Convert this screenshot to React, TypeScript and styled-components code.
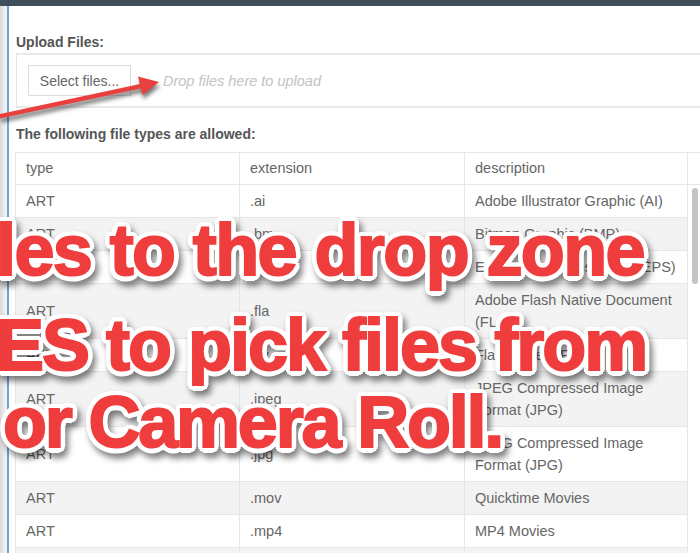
import React from "react";
import styled, { createGlobalStyle } from "styled-components";

const GlobalStyle = createGlobalStyle`
  html, body {
    margin: 0;
    padding: 0;
    background: #ffffff;
  }
  body {
    width: 700px;
    height: 553px;
    overflow: hidden;
    font-family: "Liberation Sans", Arial, sans-serif;
  }
`;

// white rim around the caption letters, built from ring offsets
const rim = (() => {
  const parts: string[] = [];
  [2, 4, 5.5].forEach((r) => {
    for (let i = 0; i < 16; i++) {
      const a = (i / 16) * Math.PI * 2;
      parts.push(`${(Math.cos(a) * r).toFixed(2)}px ${(Math.sin(a) * r).toFixed(2)}px 0 #fff`);
    }
  });
  return parts.join(", ");
})();

const Page = styled.div`
  position: relative;
  display: flex;
  flex-direction: column;
  width: 700px;
  height: 553px;
  overflow: hidden;
`;

const TopBar = styled.div`
  height: 6px;
  flex: none;
  background: #3f505b;
`;

const Frame = styled.div`
  display: flex;
  flex: 1;
`;

const SideRail = styled.div`
  width: 7px;
  flex: none;
  background: linear-gradient(90deg, #d9d9d9 0%, #ededed 60%, #f4f4f4 100%);
`;

const Content = styled.div`
  flex: none;
  width: 740px;
  border-left: 2px solid #6ea3da;
  padding-left: 7px;
  color: #666;
`;

const Label = styled.div<{ $top: number; $bottom: number }>`
  margin-top: ${(p) => p.$top}px;
  margin-bottom: ${(p) => p.$bottom}px;
  font-size: 14px;
  line-height: 16px;
  font-weight: 700;
  color: #555;
`;

const DropZone = styled.div`
  display: flex;
  align-items: center;
  gap: 32px;
  height: 51px;
  padding-left: 11px;
  border-top: 2px solid #e9e9e9;
  border-bottom: 2px solid #e9e9e9;
  border-left: 1px solid #e4e4e4;
`;

const SelectButton = styled.div`
  width: 101px;
  height: 29px;
  border: 1px solid #dcdcdc;
  display: flex;
  align-items: center;
  justify-content: center;
  font-size: 14px;
  color: #666;
  background: #fff;
`;

const DropHint = styled.span`
  font-size: 14.5px;
  font-style: italic;
  color: #c2c2c2;
`;

const Grid = styled.div`
  margin-left: -1px;
`;

const Table = styled.table<{ $width: number }>`
  width: ${(p) => p.$width}px;
  border-collapse: collapse;
  table-layout: fixed;
  font-size: 14.5px;
  line-height: 22px;
  color: #666;
`;

const Cell = styled.td<{ $width?: number }>`
  ${(p) => (p.$width ? `width: ${p.$width}px;` : "")}
  box-sizing: border-box;
  padding: 5px 8px 5px 10px;
  border: 1px solid #e6e6e6;
  border-top: none;
  vertical-align: middle;
  white-space: normal;
`;

const HeadRow = styled.tr`
  background: #fff;
  td {
    border-top: 1px solid #e6e6e6;
    padding-top: 4px;
  }
`;

const Row = styled.tr<{ $odd: boolean }>`
  background: ${(p) => (p.$odd ? "#f3f3f3" : "#fff")};
`;

const BodyArea = styled.div`
  display: flex;
`;

const ScrollTrack = styled.div`
  flex: none;
  width: 14px;
  padding: 3px 0 0 4px;
`;

const ScrollThumb = styled.div`
  width: 6px;
  height: 96px;
  border-radius: 3px;
  background: #c3c3c3;
`;

const Overlay = styled.div`
  position: absolute;
  inset: 0;
  pointer-events: none;
`;

const Arrow = styled.svg`
  position: absolute;
  left: 0;
  top: 0;
  filter: drop-shadow(1px 4px 2px rgba(0, 0, 0, 0.55));
`;

const Caption = styled.div`
  position: absolute;
  left: 0;
  top: 0;
  filter: drop-shadow(3px 5px 3px rgba(0, 0, 0, 0.5));
`;

const CaptionLine = styled.div<{ $top: number; $left: number; $track: number }>`
  margin-top: ${(p) => p.$top}px;
  margin-left: ${(p) => p.$left}px;
  font-family: "Liberation Sans", Arial, sans-serif;
  font-weight: 700;
  font-size: 72px;
  line-height: 72px;
  letter-spacing: ${(p) => p.$track}px;
  white-space: nowrap;
  color: #ef3d3d;
  -webkit-text-stroke: 2px #ef3d3d;
  text-shadow: ${rim};
`;

const files = [
  ["ART", ".ai", "Adobe Illustrator Graphic (AI)"],
  ["ART", ".bmp", "Bitmap Graphic (BMP)"],
  ["ART", ".eps", "Encapsulated PostScript (EPS)"],
  ["ART", ".fla", "Adobe Flash Native Document (FLA)"],
  ["ART", ".flv", "Flash Video (FLV)"],
  ["ART", ".jpeg", "JPEG Compressed Image Format (JPG)"],
  ["ART", ".jpg", "JPEG Compressed Image Format (JPG)"],
  ["ART", ".mov", "Quicktime Movies"],
  ["ART", ".mp4", "MP4 Movies"],
  ["ART", ".mpeg", "MPEG Movies"],
];

const App = () => {
  return (
    <Page>
      <GlobalStyle />
      <TopBar />
      <Frame>
        <SideRail />
        <Content>
          <Label $top={28} $bottom={3}>
            Upload Files:
          </Label>
          <DropZone>
            <SelectButton>Select files...</SelectButton>
            <DropHint>Drop files here to upload</DropHint>
          </DropZone>
          <Label $top={18} $bottom={10}>
            The following file types are allowed:
          </Label>
          <Grid>
            <Table $width={740}>
              <tbody>
                <HeadRow>
                  <Cell $width={224}>type</Cell>
                  <Cell $width={225}>extension</Cell>
                  <Cell $width={223}>description</Cell>
                  <Cell />
                </HeadRow>
              </tbody>
            </Table>
            <BodyArea>
              <Table $width={672}>
                <tbody>
                  {files.map(([type, ext, desc], i) => (
                    <Row key={ext} $odd={i % 2 === 1}>
                      <Cell $width={224}>{type}</Cell>
                      <Cell $width={225}>{ext}</Cell>
                      <Cell $width={223}>{desc}</Cell>
                    </Row>
                  ))}
                </tbody>
              </Table>
              <ScrollTrack>
                <ScrollThumb />
              </ScrollTrack>
            </BodyArea>
          </Grid>
        </Content>
      </Frame>

      <Overlay>
        <Arrow width="700" height="553" viewBox="0 0 700 553">
          <line x1="-6" y1="117.5" x2="144" y2="85.5" stroke="#e8403f" strokeWidth="4.5" />
          <polygon points="159,82 142.5,95 138,76.5" fill="#e8403f" />
        </Arrow>
        <Caption>
          <CaptionLine $top={214} $left={-4} $track={-1.6}>
            les to the drop zone
          </CaptionLine>
          <CaptionLine $top={23} $left={-4} $track={-2}>
            ES to pick files from
          </CaptionLine>
          <CaptionLine $top={5} $left={3} $track={-2.2}>
            or Camera Roll.
          </CaptionLine>
        </Caption>
      </Overlay>
    </Page>
  );
};

export default App;
